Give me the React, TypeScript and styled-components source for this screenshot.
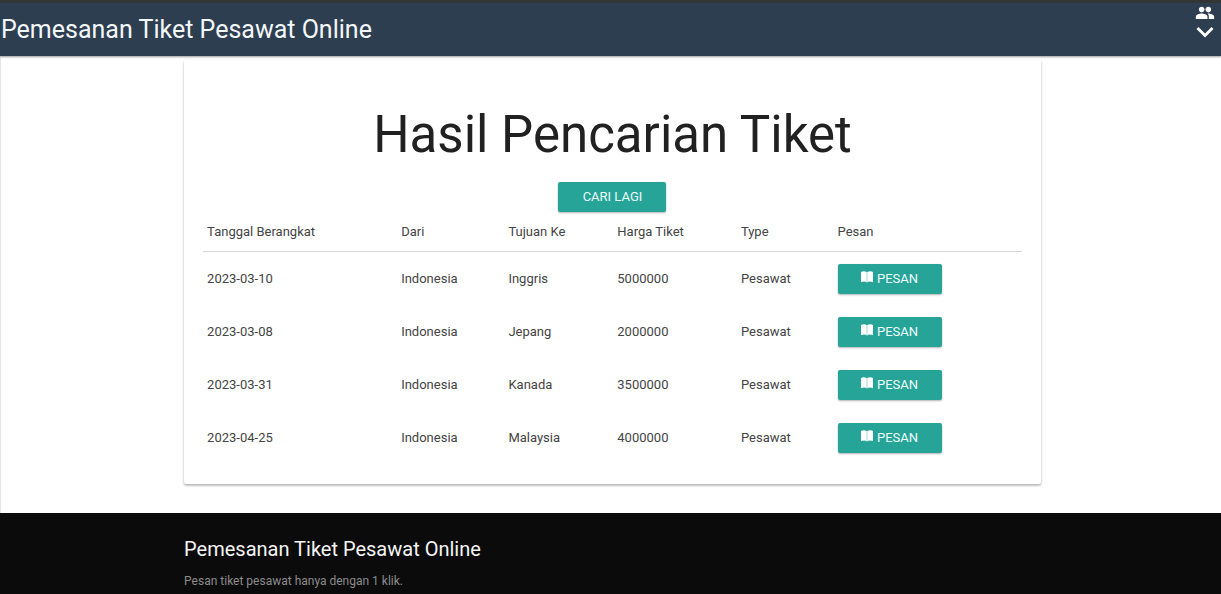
import React from "react";
import styled, { createGlobalStyle } from "styled-components";

const GlobalStyle = createGlobalStyle`
  *, *::before, *::after { box-sizing: border-box; }
  html { background: #0b0b0b; }
  body {
    margin: 0;
    background: #0b0b0b;
    color: #212121;
    font-family: Roboto, "Liberation Sans", sans-serif;
    font-size: 13px;
    line-height: 20px;
  }
`;

const Navbar = styled.header`
  display: flex;
  justify-content: space-between;
  height: 56px;
  border-top: 3px solid #343535;
  background: #2d3e50;
  color: #f4f7fa;
  box-shadow: 0 1px 2px rgba(0, 0, 0, 0.4);
  position: relative;
`;

const Brand = styled.a`
  padding-left: 1px;
  font-size: 25px;
  line-height: 53px;
  color: inherit;
  text-decoration: none;
`;

const AccountButton = styled.button`
  display: flex;
  flex-direction: column;
  align-items: center;
  align-self: flex-start;
  margin: 0;
  padding: 0 6px 0 0;
  border: 0;
  background: none;
  color: #ffffff;
  cursor: pointer;

  svg {
    display: block;
    fill: currentColor;
  }
`;

const Main = styled.main`
  padding: 4px 0 29px 3px;
  border-left: 1px solid #e4e5e8;
  background: #ffffff;
`;

const Container = styled.div`
  width: 70.4%;
  margin: 0 auto;
`;

const Card = styled.section`
  padding: 41px 19px 20px;
  border-radius: 2px;
  background: #ffffff;
  box-shadow: 0 2px 2px rgba(0, 0, 0, 0.15), 0 1px 3px rgba(0, 0, 0, 0.2);
  text-align: center;
`;

const Heading = styled.h1`
  margin: 0 0 13px;
  font-size: 51px;
  font-weight: 400;
  line-height: 68px;
`;

const Button = styled.button<{ $wide?: boolean }>`
  display: inline-flex;
  align-items: center;
  justify-content: center;
  gap: 4px;
  width: ${(p) => (p.$wide ? "108px" : "104px")};
  height: 30px;
  padding: 0;
  border: 0;
  border-radius: 2px;
  background: #26a498;
  color: #eefcfa;
  font: 400 13px/30px Roboto, "Liberation Sans", sans-serif;
  text-transform: uppercase;
  box-shadow: 0 1px 2px rgba(0, 0, 0, 0.3);
  vertical-align: top;
  cursor: pointer;
`;

const BookIcon = styled.svg`
  display: block;
  margin-bottom: 3px;
  fill: #ffffff;
`;

const Table = styled.table`
  width: 100%;
  border-collapse: collapse;
  table-layout: fixed;
  text-align: left;
  color: #444444;

  thead {
    border-bottom: 1px solid #d6d6d6;
  }
`;

const HeadCell = styled.th<{ $width: string }>`
  width: ${(p) => p.$width};
  height: 39px;
  padding: 2px 4px 0;
  font-weight: 400;
`;

const Cell = styled.td`
  padding: 12px 4px 11px;
  vertical-align: middle;
`;

const Footer = styled.footer`
  padding: 22px 0 0 4px;
  background: #0b0b0b;
`;

const FooterTitle = styled.h2`
  margin: 0 0 8px;
  color: #f5f5f5;
  font-size: 20px;
  font-weight: 400;
  line-height: 28px;
`;

const FooterText = styled.p`
  margin: 0;
  color: #8c8c8c;
  font-size: 12px;
  line-height: 20px;
`;

const columns = [
  { label: "Tanggal Berangkat", width: "23.7%" },
  { label: "Dari", width: "13.1%" },
  { label: "Tujuan Ke", width: "13.3%" },
  { label: "Harga Tiket", width: "15.1%" },
  { label: "Type", width: "11.8%" },
  { label: "Pesan", width: "23%" },
];

const tickets = [
  ["2023-03-10", "Indonesia", "Inggris", "5000000", "Pesawat"],
  ["2023-03-08", "Indonesia", "Jepang", "2000000", "Pesawat"],
  ["2023-03-31", "Indonesia", "Kanada", "3500000", "Pesawat"],
  ["2023-04-25", "Indonesia", "Malaysia", "4000000", "Pesawat"],
];

export default function App() {
  return (
    <>
      <GlobalStyle />
      <Navbar>
        <Brand href="#">Pemesanan Tiket Pesawat Online</Brand>
        <AccountButton type="button" aria-label="Akun">
          <svg width="20" height="20" viewBox="0 0 24 24" aria-hidden="true">
            <path d="M16 11.300c1.900 0 3.400-1.500 3.400-3.400S17.900 4.500 16 4.500s-3.400 1.500-3.400 3.400 1.500 3.400 3.400 3.400zm-8 0c1.900 0 3.400-1.500 3.400-3.400S9.900 4.500 8 4.500 4.600 6 4.600 7.900 6.100 11.300 8 11.300zm0 1.300c-2.330 0-7 1.300-7 3.900V19.200h14v-2.700c0-2.600-4.670-3.900-7-3.900zm8 0c-.29 0-.62.02-.97.05 1.160.84 1.570 2.300 1.570 3.850v2.700H23v-2.700c0-2.600-4.670-3.900-7-3.900z" />
          </svg>
          <svg width="20" height="18" viewBox="0 0 20 18" aria-hidden="true">
            <path d="M3.500 4 10 10.400 16.500 4l2 2-8.500 8.400L1.500 6z" />
          </svg>
        </AccountButton>
      </Navbar>
      <Main>
        <Container>
          <Card>
            <Heading>Hasil Pencarian Tiket</Heading>
            <Button type="button" $wide>Cari lagi</Button>
            <Table>
              <thead>
                <tr>
                  {columns.map((c) => (
                    <HeadCell key={c.label} scope="col" $width={c.width}>{c.label}</HeadCell>
                  ))}
                </tr>
              </thead>
              <tbody>
                {tickets.map((t) => (
                  <tr key={t[0]}>
                    {t.map((value, i) => (
                      <Cell key={i}>{value}</Cell>
                    ))}
                    <Cell>
                      <Button type="button">
                        <BookIcon width="12" height="12" viewBox="0 0 12 12" aria-hidden="true">
                          <path d="M0 1Q2.800-.6 5.700 1v10Q2.800 9.800 0 11.200zM6.300 1Q9.200-.6 12 1v10.200Q9.200 9.800 6.300 11z" />
                          <path d="M5.500 1.200h1v10.600h-1z" fillOpacity="0.6" />
                        </BookIcon>
                        Pesan
                      </Button>
                    </Cell>
                  </tr>
                ))}
              </tbody>
            </Table>
          </Card>
        </Container>
      </Main>
      <Footer>
        <Container>
          <FooterTitle>Pemesanan Tiket Pesawat Online</FooterTitle>
          <FooterText>Pesan tiket pesawat hanya dengan 1 klik.</FooterText>
        </Container>
      </Footer>
    </>
  );
}
